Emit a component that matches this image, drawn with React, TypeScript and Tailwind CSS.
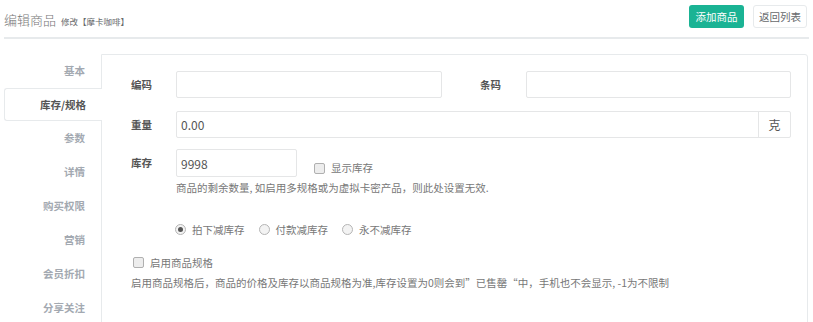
import React from 'react';

const navItems = ['基本', '库存/规格', '参数', '详情', '购买权限', '营销', '会员折扣', '分享关注'];

function Radio({ checked, label }: { checked?: boolean; label: string }) {
    return (
        <label className="flex items-center gap-[6px]">
            <span className="w-[11px] h-[11px] rounded-full border border-[#b5b5b5] bg-[#f3f3f3] flex items-center justify-center">
                {checked && <span className="w-[5px] h-[5px] rounded-full bg-[#555]" />}
            </span>
            <span>{label}</span>
        </label>
    );
}

function Check({ label }: { label: string }) {
    return (
        <label className="flex items-center gap-[6px]">
            <span className="w-[11px] h-[11px] rounded-[2px] border border-[#b0b0b0] bg-[#ededed]" />
            <span>{label}</span>
        </label>
    );
}

export default function App() {
    return (
        <div
            className="w-[813px] h-[322px] overflow-hidden bg-white text-[10.5px] text-[#777]"
            style={{ fontFamily: '"Noto Sans CJK SC", "Noto Sans", sans-serif' }}
        >
            {/* Header */}
            <div className="mx-[4px] h-[39px] flex items-start justify-between border-b-2 border-[#e7eaec]">
                <div className="flex items-baseline gap-[5px] pt-[11px]">
                    <span className="text-[13px] leading-[18px] font-light text-[#777]">编辑商品</span>
                    <span className="text-[8.5px] text-[#676a6c]">修改【摩卡咖啡】</span>
                </div>
                <div className="flex gap-[9px] pt-[5px] pr-[2px]">
                    <button className="h-[23px] w-[55px] rounded-[3px] bg-[#1ab394] text-white text-[10.5px]">添加商品</button>
                    <button className="h-[23px] w-[54px] rounded-[3px] bg-white border border-[#e7eaec] text-[#676a6c] text-[10.5px]">返回列表</button>
                </div>
            </div>

            {/* Body */}
            <div className="flex mt-[15px] ml-[4px] mr-[5px]">
                {/* Left tabs */}
                <div className="w-[97px] shrink-0 flex flex-col">
                    {navItems.map((item) =>
                        item === '库存/规格' ? (
                            <div
                                key={item}
                                className="relative z-10 -mr-px h-[33px] flex items-center justify-end pr-[16px] bg-white border border-r-0 border-[#e7eaec] rounded-l-[3px] font-bold text-[#555]"
                            >
                                {item}
                            </div>
                        ) : (
                            <div key={item} className="h-[34px] flex items-center justify-end pr-[16px] font-bold text-[#a3a9b1]">
                                {item}
                            </div>
                        )
                    )}
                </div>

                {/* Panel */}
                <div className="flex-1 h-[300px] border border-[#e7eaec] rounded-tr-[3px] pl-[29px] pr-[16px] pt-[16px]">
                    <div className="flex items-center h-[27px]">
                        <span className="w-[45px] font-bold text-[#555]">编码</span>
                        <input className="w-[266px] h-[27px] border border-[#e5e6e7] rounded-[2px] px-[5px] outline-none" />
                        <span className="ml-[38px] w-[46px] font-bold text-[#555]">条码</span>
                        <input className="flex-1 h-[27px] border border-[#e5e6e7] rounded-[2px] px-[5px] outline-none" />
                    </div>

                    <div className="flex items-center h-[27px] mt-[13px]">
                        <span className="w-[45px] font-bold text-[#555]">重量</span>
                        <div className="flex flex-1 h-[27px] border border-[#e5e6e7] rounded-[2px]">
                            <input defaultValue="0.00" className="flex-1 px-[4px] text-[12px] text-[#555] outline-none" />
                            <span className="w-[32px] flex items-center justify-center border-l border-[#e5e6e7] text-[12px] text-[#555]">克</span>
                        </div>
                    </div>

                    <div className="flex items-center h-[28px] mt-[11px]">
                        <span className="w-[45px] font-bold text-[#555]">库存</span>
                        <input defaultValue="9998" className="w-[121px] h-[28px] border border-[#e5e6e7] rounded-[2px] px-[4px] text-[12px] text-[#555] outline-none" />
                        <div className="ml-[17px] mt-[10px]">
                            <Check label="显示库存" />
                        </div>
                    </div>
                    <div className="pl-[45px] mt-[3px] leading-[16px]">商品的剩余数量, 如启用多规格或为虚拟卡密产品，则此处设置无效.</div>

                    <div className="flex items-center gap-[14px] pl-[44px] mt-[26px]">
                        <Radio checked label="拍下减库存" />
                        <Radio label="付款减库存" />
                        <Radio label="永不减库存" />
                    </div>

                    <div className="mt-[17px] pl-[2px]">
                        <Check label="启用商品规格" />
                    </div>
                    <div className="mt-[4px] leading-[16px]">
                        启用商品规格后，商品的价格及库存以商品规格为准,库存设置为0则会到”已售罄“中，手机也不会显示, -1为不限制
                    </div>
                </div>
            </div>
        </div>
    );
}
